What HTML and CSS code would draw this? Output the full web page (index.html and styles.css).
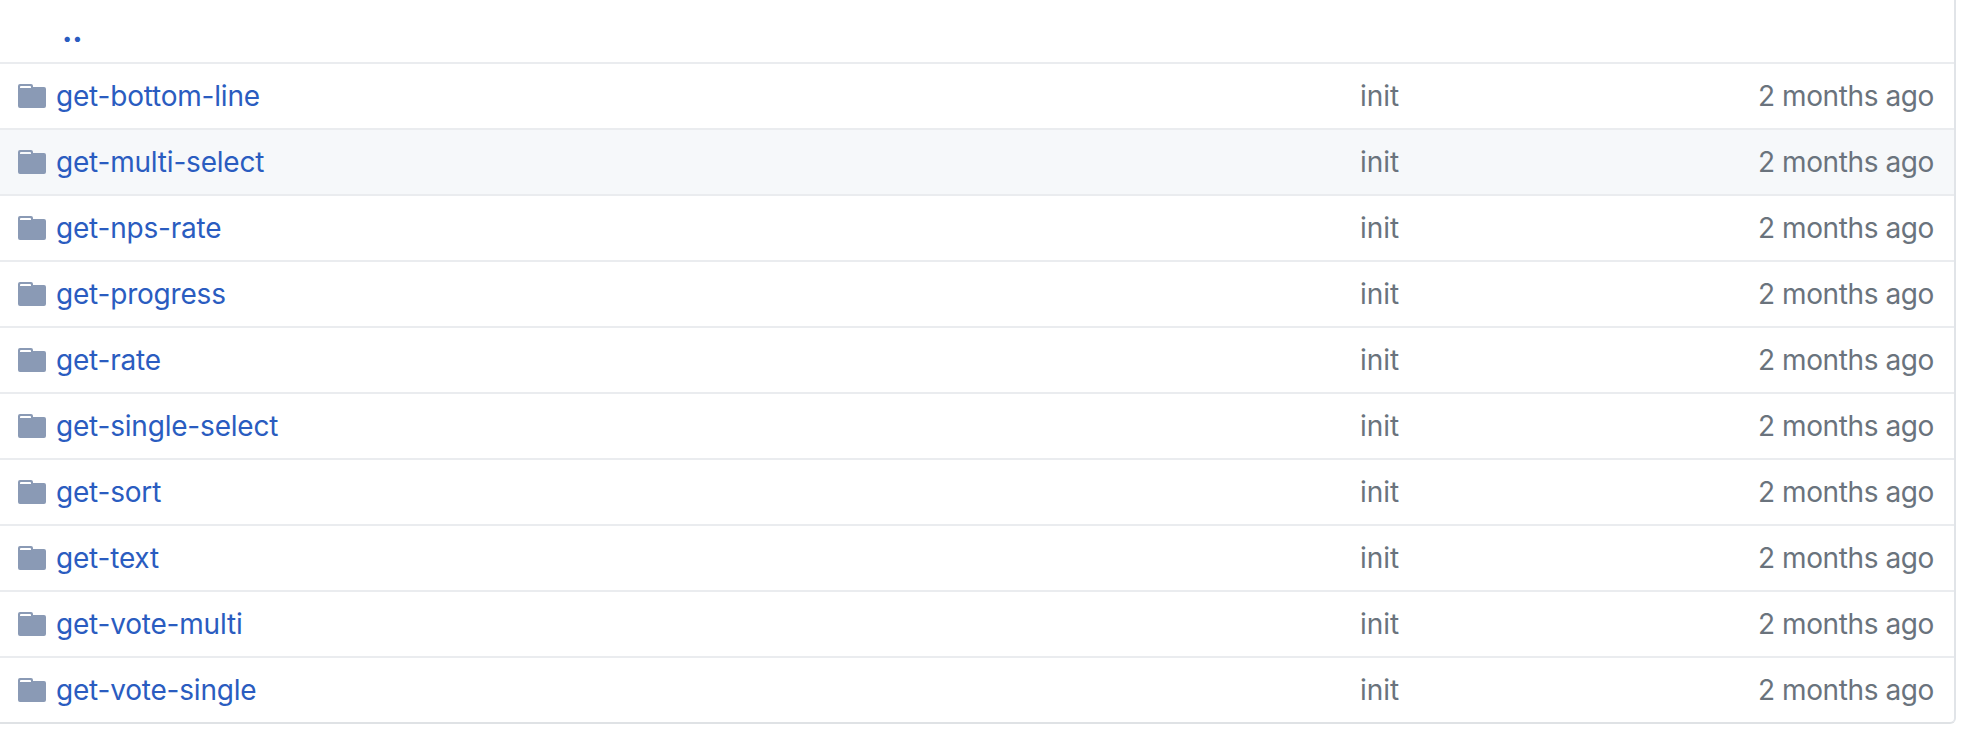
FILE: index.html
```html
<!DOCTYPE html>
<html lang="en">
<head>
  <meta charset="UTF-8" />
  <title>Files</title>
  <link rel="stylesheet" href="styles.css">
</head>
<body>
  <div class="file-wrap">
    <div class="row row-up">
      <span class="icon"></span>
      <a class="name up-link" href="#">..</a>
      <span class="message"></span>
      <span class="age"></span>
    </div>
    <div class="row">
      <svg class="icon" viewBox="0 0 28 24"><path d="M2 0H13Q15 0 15 2V3H26Q28 3 28 5V22Q28 24 26 24H2Q0 24 0 22V2Q0 0 2 0ZM3 2Q2 2 2 3V4H13V3Q13 2 12 2Z" fill-rule="evenodd"/></svg>
      <a class="name" href="#">get-bottom-line</a>
      <span class="message">init</span>
      <span class="age">2 months ago</span>
    </div>
    <div class="row row-hover">
      <svg class="icon" viewBox="0 0 28 24"><path d="M2 0H13Q15 0 15 2V3H26Q28 3 28 5V22Q28 24 26 24H2Q0 24 0 22V2Q0 0 2 0ZM3 2Q2 2 2 3V4H13V3Q13 2 12 2Z" fill-rule="evenodd"/></svg>
      <a class="name" href="#">get-multi-select</a>
      <span class="message">init</span>
      <span class="age">2 months ago</span>
    </div>
    <div class="row">
      <svg class="icon" viewBox="0 0 28 24"><path d="M2 0H13Q15 0 15 2V3H26Q28 3 28 5V22Q28 24 26 24H2Q0 24 0 22V2Q0 0 2 0ZM3 2Q2 2 2 3V4H13V3Q13 2 12 2Z" fill-rule="evenodd"/></svg>
      <a class="name" href="#">get-nps-rate</a>
      <span class="message">init</span>
      <span class="age">2 months ago</span>
    </div>
    <div class="row">
      <svg class="icon" viewBox="0 0 28 24"><path d="M2 0H13Q15 0 15 2V3H26Q28 3 28 5V22Q28 24 26 24H2Q0 24 0 22V2Q0 0 2 0ZM3 2Q2 2 2 3V4H13V3Q13 2 12 2Z" fill-rule="evenodd"/></svg>
      <a class="name" href="#">get-progress</a>
      <span class="message">init</span>
      <span class="age">2 months ago</span>
    </div>
    <div class="row">
      <svg class="icon" viewBox="0 0 28 24"><path d="M2 0H13Q15 0 15 2V3H26Q28 3 28 5V22Q28 24 26 24H2Q0 24 0 22V2Q0 0 2 0ZM3 2Q2 2 2 3V4H13V3Q13 2 12 2Z" fill-rule="evenodd"/></svg>
      <a class="name" href="#">get-rate</a>
      <span class="message">init</span>
      <span class="age">2 months ago</span>
    </div>
    <div class="row">
      <svg class="icon" viewBox="0 0 28 24"><path d="M2 0H13Q15 0 15 2V3H26Q28 3 28 5V22Q28 24 26 24H2Q0 24 0 22V2Q0 0 2 0ZM3 2Q2 2 2 3V4H13V3Q13 2 12 2Z" fill-rule="evenodd"/></svg>
      <a class="name" href="#">get-single-select</a>
      <span class="message">init</span>
      <span class="age">2 months ago</span>
    </div>
    <div class="row">
      <svg class="icon" viewBox="0 0 28 24"><path d="M2 0H13Q15 0 15 2V3H26Q28 3 28 5V22Q28 24 26 24H2Q0 24 0 22V2Q0 0 2 0ZM3 2Q2 2 2 3V4H13V3Q13 2 12 2Z" fill-rule="evenodd"/></svg>
      <a class="name" href="#">get-sort</a>
      <span class="message">init</span>
      <span class="age">2 months ago</span>
    </div>
    <div class="row">
      <svg class="icon" viewBox="0 0 28 24"><path d="M2 0H13Q15 0 15 2V3H26Q28 3 28 5V22Q28 24 26 24H2Q0 24 0 22V2Q0 0 2 0ZM3 2Q2 2 2 3V4H13V3Q13 2 12 2Z" fill-rule="evenodd"/></svg>
      <a class="name" href="#">get-text</a>
      <span class="message">init</span>
      <span class="age">2 months ago</span>
    </div>
    <div class="row">
      <svg class="icon" viewBox="0 0 28 24"><path d="M2 0H13Q15 0 15 2V3H26Q28 3 28 5V22Q28 24 26 24H2Q0 24 0 22V2Q0 0 2 0ZM3 2Q2 2 2 3V4H13V3Q13 2 12 2Z" fill-rule="evenodd"/></svg>
      <a class="name" href="#">get-vote-multi</a>
      <span class="message">init</span>
      <span class="age">2 months ago</span>
    </div>
    <div class="row">
      <svg class="icon" viewBox="0 0 28 24"><path d="M2 0H13Q15 0 15 2V3H26Q28 3 28 5V22Q28 24 26 24H2Q0 24 0 22V2Q0 0 2 0ZM3 2Q2 2 2 3V4H13V3Q13 2 12 2Z" fill-rule="evenodd"/></svg>
      <a class="name" href="#">get-vote-single</a>
      <span class="message">init</span>
      <span class="age">2 months ago</span>
    </div>
  </div>
</body>
</html>
```

FILE: styles.css
```css
body {
  margin: 0;
  background-color: #fff;
  font-family: Inter, "Liberation Sans", sans-serif;
  font-size: 28px;
}
.file-wrap {
  width: 1956px;
  box-sizing: border-box;
  border-right: 2px solid #e1e4e8;
  border-bottom: 2px solid #dfe2e5;
  border-bottom-right-radius: 6px;
}
.row {
  display: grid;
  grid-template-columns: 28px 1314px 1fr auto;
  align-items: center;
  height: 64px;
  padding: 0 20px 0 18px;
  border-bottom: 2px solid #eaecef;
}
.row:last-child {
  border-bottom: none;
}
.row-up {
  height: 60px;
  padding-bottom: 2px;
}
.row-hover {
  background-color: #f6f8fa;
}
.icon {
  width: 28px;
  height: 24px;
  fill: #8a9ab5;
}
.name {
  margin-left: 10px;
  color: #2a5cc0;
  letter-spacing: -0.2px;
  text-decoration: none;
}
.up-link {
  margin-left: 16px;
  font-size: 31px;
  font-weight: 700;
  letter-spacing: 0;
}
.message {
  color: #6a737d;
}
.age {
  color: #6a737d;
  letter-spacing: -0.4px;
  text-align: right;
}
```
